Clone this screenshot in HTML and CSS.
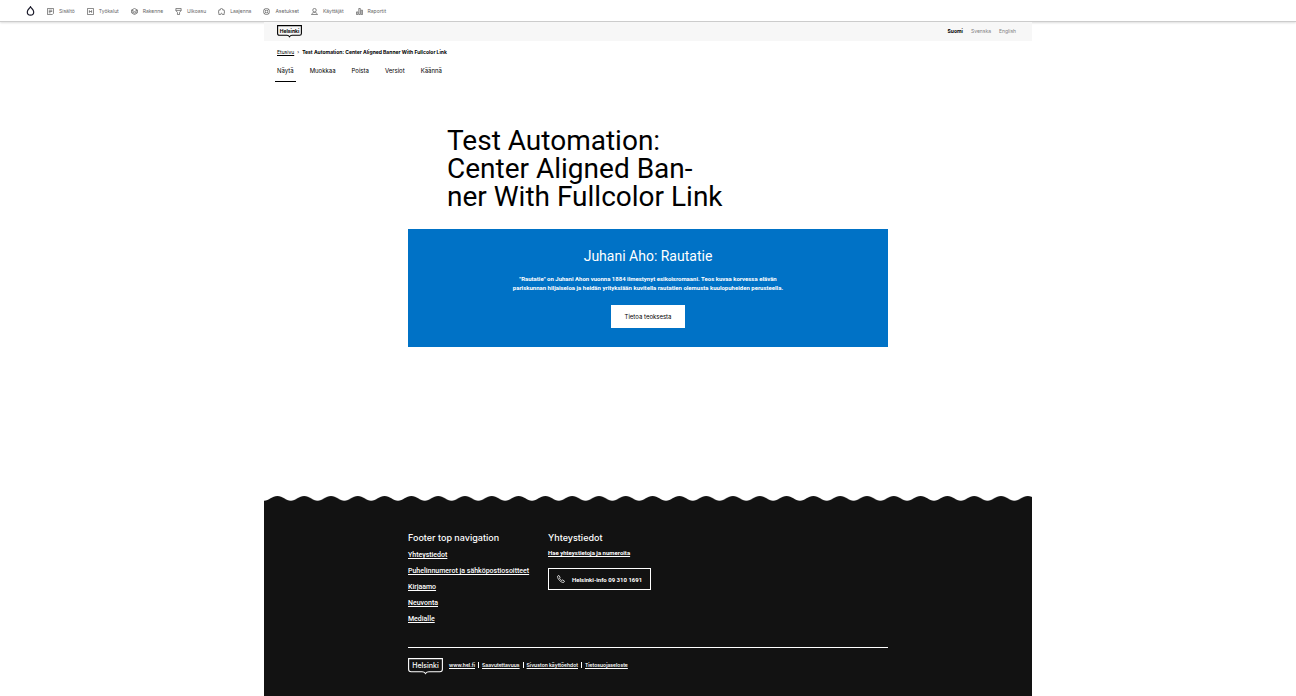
FILE: index.html
```html
<!DOCTYPE html>
<html lang="fi">
<head>
<meta charset="utf-8">
<meta name="viewport" content="width=device-width, initial-scale=1">
<title>Test Automation: Center Aligned Banner With Fullcolor Link</title>
<link rel="stylesheet" href="styles.css">
</head>
<body>
<nav class="toolbar" aria-label="Hallinta">
  <a class="toolbar-home" href="#" aria-label="Etusivu"><svg viewBox="0 0 8 10"><path d="M4 .8C3.300 2.400 .8 3.600 .8 5.900a3.200 3.200 0 0 0 6.400 0C7.200 3.600 4.700 2.400 4 .8z"/></svg></a>
  <a class="tool" href="#"><svg viewBox="0 0 8 8"><path d="M.5.5h7v5.500l-1.500 1.500H.5zM2 2.500h4M2 4h4M2 5.500h2"/></svg>Sisältö</a>
  <a class="tool" href="#"><svg viewBox="0 0 8 8"><path d="M.5.5h7v7h-7zM2.700 2.500v3M5.300 2.500v3M2.700 4h2.600"/></svg>Työkalut</a>
  <a class="tool" href="#"><svg viewBox="0 0 8 8"><path d="M4 .5l3.300 1.800L4 4.200.7 2.300zM.7 2.300v1.800L4 6l3.300-1.900V2.300M.7 4.100v1.500L4 7.500l3.300-1.900V4.100"/></svg>Rakenne</a>
  <a class="tool" href="#"><svg viewBox="0 0 8 8"><path d="M1 .5h6v2.500L5.200 5v2.500H2.800V5L1 3zM1 2.700h6"/></svg>Ulkoasu</a>
  <a class="tool" href="#"><svg viewBox="0 0 8 8"><path d="M1 7.500V5.200H.4V3.700H1V2.200h1.800c-.8-2.400 3.200-2.400 2.400 0H7v1.500h.6v1.500H7v2.300H5c0-2-2-2-2 0z"/></svg>Laajenna</a>
  <a class="tool" href="#"><svg viewBox="0 0 8 8"><circle cx="4" cy="4" r="3.500"/><circle cx="4" cy="4" r="1.500"/><path d="M1.500 1.500l1.400 1.400M6.500 1.500L5.100 2.900M1.500 6.500l1.400-1.400M6.500 6.500L5.100 5.100"/></svg>Asetukset</a>
  <a class="tool" href="#"><svg viewBox="0 0 8 8"><circle cx="4" cy="2.500" r="2"/><path d="M.6 7.500h6.800C7 5.900 5.500 5.100 4 5.100S1 5.900.6 7.500z"/></svg>Käyttäjät</a>
  <a class="tool" href="#"><svg viewBox="0 0 8 8"><path d="M.5 4.500h1.700v3H.5zM3.200.5h1.700v7H3.200zM5.900 2.500h1.600v5H5.900z"/></svg>Raportit</a>
</nav>
<div class="page">
  <header class="site-header">
    <a class="logo" href="#" aria-label="Helsinki"><svg viewBox="0 0 25 13"><path d="M.6.6h23.800v7.900q0 1.800-1.800 1.800H15q-1.500 0-2.500 1.500-1-1.500-2.500-1.500H2.400Q.6 10.300.6 8.500z"/><text x="12.500" y="7.600">Helsinki</text></svg></a>
    <nav class="languages" aria-label="Kieli"><a class="current" href="#">Suomi</a><a href="#">Svenska</a><a href="#">English</a></nav>
  </header>
  <nav class="crumbs" aria-label="Murupolku"><a href="#">Etusivu</a><span class="chevron">›</span><span>Test Automation: Center Aligned Banner With Fullcolor Link</span></nav>
  <nav class="tabs" aria-label="Välilehdet"><a class="active" href="#">Näytä</a><a href="#">Muokkaa</a><a href="#">Poista</a><a href="#">Versiot</a><a href="#">Käännä</a></nav>
  <main>
    <h1>Test Automation: Center Aligned Ban-<br>ner With Fullcolor Link</h1>
    <section class="banner">
      <h2>Juhani Aho: Rautatie</h2>
      <p>"Rautatie" on Juhani Ahon vuonna 1884 ilmestynyt esikoisromaani. Teos kuvaa korvessa elävän<br>pariskunnan hiljaiseloa ja heidän yrityksiään kuvitella rautatien olemusta kuulopuheiden perusteella.</p>
      <a class="banner-link" href="#">Tietoa teoksesta</a>
    </section>
  </main>
  <footer>
    <svg class="wave" aria-hidden="true"><defs><pattern id="wave" width="26.800" height="6" patternUnits="userSpaceOnUse"><path d="M0 4.700C5 4.700 8 .1 13.400 .1S21.800 4.700 26.800 4.700V6H0z"/></pattern></defs><rect width="100%" height="6" fill="url(#wave)"/></svg>
    <div class="footer-body">
      <div class="columns">
        <section class="footer-nav"><h2>Footer top navigation</h2>
          <ul><li><a href="#">Yhteystiedot</a></li><li><a href="#">Puhelinnumerot ja sähköpostiosoitteet</a></li><li><a href="#">Kirjaamo</a></li><li><a href="#">Neuvonta</a></li><li><a href="#">Medialle</a></li></ul>
        </section>
        <section class="contact"><h2>Yhteystiedot</h2>
          <a class="search-link" href="#">Hae yhteystietoja ja numeroita</a>
          <a class="phone" href="#"><svg viewBox="0 0 8 8"><path d="M.6 1.200L1.800.4l1.300 1.900-.7.800c.4 1 1.300 1.900 2.400 2.500l.9-.7 1.800 1.300-.8 1.200C4.500 8 .2 4.200.6 1.200z"/></svg>Helsinki-info 09 310 1691</a>
        </section>
      </div>
      <div class="bottom">
        <a class="logo footer-logo" href="#" aria-label="Helsinki"><svg viewBox="0 0 35 17"><path d="M.6.6h33.800v10.700q0 2.500-2.500 2.500H21q-2.300 0-3.500 1.700-1.200-1.700-3.500-1.700H3.100Q.6 13.800.6 11.300z"/><text x="17.500" y="9.800">Helsinki</text></svg></a>
        <ul><li><a href="#">www.hel.fi</a></li><li><a href="#">Saavutettavuus</a></li><li><a href="#">Sivuston käyttöehdot</a></li><li><a href="#">Tietosuojaseloste</a></li></ul>
      </div>
    </div>
  </footer>
</div>
</body>
</html>
```
FILE: styles.css
```css
* { box-sizing: border-box; }
body { margin: 0; min-height: 100vh; display: flex; flex-direction: column; background: #fff; color: #000; font: 6px/9px Inter, "Liberation Sans", sans-serif; }
h1, h2, p, ul { margin: 0; padding: 0; font-weight: 400; }
ul { list-style: none; }
a { color: inherit; }
svg { display: block; fill: none; stroke: currentColor; }

.toolbar { display: flex; align-items: center; height: 22px; padding: 1px 0 0 26px; border-bottom: 1px solid #ccc; box-shadow: 0 1px 2px #0002; color: #666; font-size: 5px; gap: 12px; }
.toolbar a { text-decoration: none; }
.toolbar-home { color: #1b1b2b; }
.toolbar-home svg { width: 9px; height: 10px; stroke-width: 1.2; }
.tool { display: flex; align-items: center; gap: 5px; }
.tool svg { width: 7px; height: 7px; stroke-width: 0.9; }

.page { display: flex; flex: 1; flex-direction: column; width: 100%; max-width: 768px; margin: 0 auto; }
.site-header { display: flex; justify-content: space-between; align-items: center; height: 19px; padding: 0 16px 0 13px; background: #f7f7f7; }
.logo svg { width: 25px; height: 13px; stroke-width: 1.1; }
.logo text { fill: currentColor; stroke: none; text-anchor: middle; font-size: 5px; font-weight: 700; }
.languages { display: flex; gap: 8px; color: #808080; font-size: 5px; }
.languages a { text-decoration: none; }
.languages .current { color: #000; font-weight: 700; }
.crumbs { display: flex; gap: 3px; padding: 7px 13px 0; font-size: 5px; font-weight: 700; }
.crumbs a { font-weight: 400; text-underline-offset: 1px; }
.crumbs .chevron { font-weight: 400; }
.tabs { display: flex; gap: 12px; padding: 9px 11px 0; }
.tabs a { padding: 0 2px 6px; border-bottom: 1px solid transparent; text-decoration: none; }
.tabs .active { border-color: #000; }

main { width: 100%; max-width: 480px; margin: 0 auto; padding-top: 45px; }
h1 { max-width: 288px; margin-left: 39px; font: 28px/28px Roboto, "Liberation Sans", sans-serif; }
.banner { display: flex; flex-direction: column; align-items: center; margin-top: 18px; padding: 18px 0 19px; background: #0072c6; color: #fff; text-align: center; }
.banner h2 { font: 14px/18px Roboto, "Liberation Sans", sans-serif; }
.banner p { margin-top: 9px; font-family: Roboto, "Liberation Sans", sans-serif; font-weight: 700; }
.banner-link { margin-top: 13px; padding: 7px 14px; background: #fff; color: #000; text-decoration: none; }

footer { display: flex; flex: 1; flex-direction: column; margin-top: 149px; color: #fff; }
.wave { width: 100%; height: 6px; }
.wave path { fill: #121212; stroke: none; }
.wave rect { stroke: none; }
.footer-body { flex: 1; padding: 30px 144px 18px; background: #121212; }
.footer-body a { text-underline-offset: 1px; }
.columns { display: grid; grid-template-columns: 121px 1fr; gap: 19px; padding-bottom: 22px; border-bottom: 1px solid #fff; }
.columns h2 { font-size: 9px; line-height: 12px; font-weight: 500; }
.footer-nav ul { padding-top: 1px; }
.footer-nav li { margin-top: 4px; font: 500 7px/12px Roboto, "Liberation Sans", sans-serif; white-space: nowrap; }
.contact { display: flex; flex-direction: column; align-items: flex-start; }
.search-link { margin-top: 4px; font-family: Roboto, "Liberation Sans", sans-serif; font-weight: 700; }
.phone { display: flex; align-items: center; gap: 7px; height: 22px; margin-top: 11px; padding: 0 8px; border: 1px solid #fff; font-family: Roboto, "Liberation Sans", sans-serif; font-weight: 700; text-decoration: none; }
.phone svg { width: 8px; height: 8px; stroke-width: 0.8; }
.bottom { display: flex; align-items: center; gap: 6px; padding-top: 10px; font-size: 5px; }
.footer-logo svg { width: 35px; height: 17px; }
.footer-logo text { font-size: 7px; font-weight: 500; }
.bottom ul { display: flex; padding-bottom: 3px; line-height: 6px; font-weight: 600; }
.bottom li + li { margin-left: 3px; padding-left: 3px; border-left: 1px solid #fff; }
```
